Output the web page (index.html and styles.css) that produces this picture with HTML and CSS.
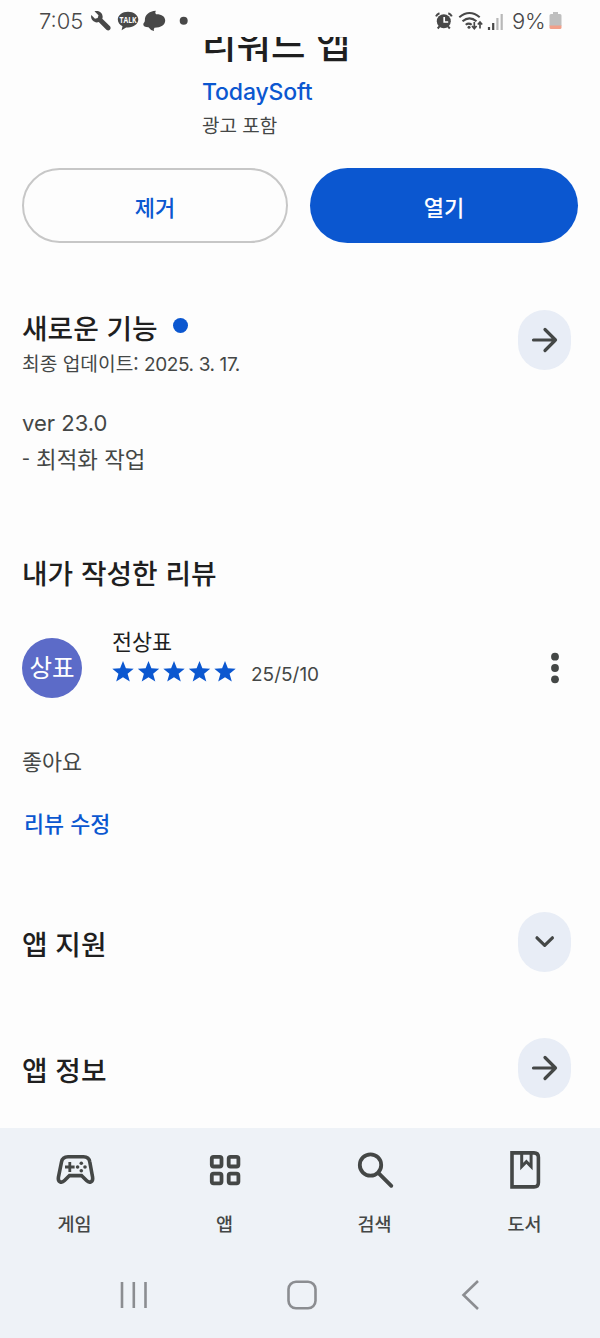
FILE: index.html
```html
<!DOCTYPE html>
<html lang="ko">
<head>
<meta charset="utf-8">
<title>리워드 앱</title>
<link rel="stylesheet" href="styles.css">
</head>
<body>
<header class="status">
  <span class="clock">7:05</span>
  <svg class="status-left" width="100" height="24" viewBox="0 0 100 24" fill="#484848">
    <path d="M3.5 2.3 7.5 6.200 6.700 9 4 9.700 .3 6C-.9 10.500 3.100 14.500 7.700 13.100L15.400 20.800Q17.400 22 18.800 20.700 20.300 19 19 17.300L11.300 9.800C13 5 8.500.5 3.500 2.300Z"/>
    <path d="M37 2.700c-5.700 0-10.200 3.500-10.200 7.900 0 2.900 1.900 5.300 4.700 6.700l-.9 4 4.500-2.900q1 .1 1.900.1c5.700 0 10.300-3.500 10.300-7.900S42.700 2.700 37 2.700Z"/>
    <text class="talk" x="28.500" y="13.500" textLength="17" lengthAdjust="spacingAndGlyphs">TALK</text>
    <path d="M64.800 1.800Q63.600 4 65 5.200C70.500 5 74.200 7.500 74.200 11.500 74.200 15.800 70 18.600 63.500 18.700Q62.300 20 63 22 59 21 57.500 18.300C54 18.300 52.200 17 52.300 15.300 52.400 13.800 54 13.200 53.900 11 53.800 6 58 2.200 64.800 1.800Z"/>
    <circle cx="92.700" cy="11.800" r="4"/>
  </svg>
  <svg class="status-right" width="72" height="24" viewBox="0 0 72 24" fill="none" stroke="#484848">
    <circle cx="8.800" cy="12.200" r="7" fill="#484848" stroke="none"/>
    <path d="M9.200 8v5h4" stroke="#fff" stroke-width="1.700"/>
    <path d="M1 7.300Q2 5 4.500 4.200M16.800 7.300Q15.800 5 13.300 4.200M4.500 17.300 2.700 19.500M13 17.300l1.800 2.200" stroke-width="2"/>
    <path d="M24.300 8.200Q34.500-.2 44.700 8.200M27.500 12.300Q34.500 6.300 41.500 12.300M30.700 15.800q3-2.400 6 0" stroke-width="2.100"/>
    <circle cx="34" cy="18.300" r="1.500" fill="#484848" stroke="none"/>
    <path d="M39.300 13v6.500M37 17l2.300 2.700 2.300-2.700M45 19.500V13M42.800 15.500 45 13l2.200 2.500" stroke-width="1.700"/>
    <path d="M54 18v3M58.200 14v7" stroke-width="2.200"/>
    <path d="M62.400 9v12M66.700 5v16" stroke="#b8b8b8" stroke-width="2.200"/>
  </svg>
  <span class="percent">9%</span>
  <svg width="13" height="20" viewBox="0 0 13 20"><path d="M4 1h5v2h2q1.500 0 1.500 1.500V15H.5V4.500Q.5 3 2 3h2Z" fill="#bfbfbf"/><path d="M.5 14.500h12v2q0 1.500-1.500 1.500H2Q.5 18 .5 16.500Z" fill="#f2a08a"/></svg>
</header>

<main>
  <section class="hero">
    <h1 class="title">리워드 앱</h1>
    <div class="developer">TodaySoft</div>
    <div class="ads">광고 포함</div>
  </section>

  <div class="actions">
    <button class="button outline">제거</button>
    <button class="button filled">열기</button>
  </div>

  <section class="news">
    <div class="row">
      <div class="news-head">
        <h2>새로운 기능<i class="dot"></i></h2>
        <p class="updated">최종 업데이트: <span class="date">2025. 3. 17.</span></p>
      </div>
      <span class="round"><svg width="28" height="28" viewBox="0 0 28 28"><path d="M2.500 14h22M14 3.500 24.500 14 14 24.500"/></svg></span>
    </div>
    <p class="notes"><span class="version">ver 23.0</span><span>- 최적화 작업</span></p>
  </section>

  <section class="review">
    <h2>내가 작성한 리뷰</h2>
    <div class="reviewer">
      <span class="avatar">상표</span>
      <div class="who">
        <div class="name">전상표</div>
        <div class="rating">
          <svg width="124" height="22" viewBox="0 0 124 22" fill="#0b57d0">
            <defs><path id="star" d="m11 0 2.900 7.300 7.800.4-6.100 5 2.200 7.900L11 16.300l-6.800 4.300 2.200-7.900L.3 7.700l7.800-.4Z"/></defs>
            <use href="#star"/><use href="#star" x="25.500"/><use href="#star" x="51"/><use href="#star" x="76.500"/><use href="#star" x="102"/>
          </svg>
          <span class="review-date">25/5/10</span>
        </div>
      </div>
      <svg class="more" width="10" height="32" viewBox="0 0 10 32" fill="#444746"><circle cx="5" cy="4.700" r="3.900"/><circle cx="5" cy="16" r="3.900"/><circle cx="5" cy="27.300" r="3.900"/></svg>
    </div>
    <p class="comment">좋아요</p>
    <a class="edit">리뷰 수정</a>
  </section>

  <section class="row support">
    <h2>앱 지원</h2>
    <span class="round"><svg width="28" height="28" viewBox="0 0 28 28"><path d="m6 9.800 7.700 7.500 7.700-7.500"/></svg></span>
  </section>
  <section class="row about">
    <h2>앱 정보</h2>
    <span class="round"><svg width="28" height="28" viewBox="0 0 28 28"><path d="M2.500 14h22M14 3.500 24.500 14 14 24.500"/></svg></span>
  </section>
</main>

<footer class="bottom">
  <nav class="tabs">
    <a class="tab"><svg width="44" height="44" viewBox="0 0 44 44" fill="none" stroke="#444746" stroke-width="3.600">
      <path d="M15 8.800h15.500q5.500 0 6.300 5.200l2.800 15.300c.8 4.700-3.200 6.200-6.100 3.300L28.500 27.600H16.500l-5 5c-2.900 2.900-6.900 1.400-6.100-3.300L8.500 14q1-5.200 6.500-5.200Z"/>
      <path d="M16.800 14v10M12 19h9.600" stroke-width="2.800"/>
      <g fill="#444746" stroke="none"><circle cx="28.300" cy="15.200" r="1.800"/><circle cx="24.600" cy="19" r="1.800"/><circle cx="32" cy="19" r="1.800"/><circle cx="28.300" cy="22.800" r="1.800"/></g>
    </svg><span>게임</span></a>
    <a class="tab"><svg width="44" height="44" viewBox="0 0 44 44" fill="none" stroke="#444746" stroke-width="3.800">
      <rect x="8.800" y="8.800" width="9.700" height="9.700" rx="1.800"/><rect x="25.700" y="8.800" width="9.700" height="9.700" rx="1.800"/><rect x="8.800" y="25.700" width="9.700" height="9.700" rx="1.800"/><rect x="25.700" y="25.700" width="9.700" height="9.700" rx="1.800"/>
    </svg><span>앱</span></a>
    <a class="tab"><svg width="44" height="44" viewBox="0 0 44 44" fill="none" stroke="#444746" stroke-width="3.800" stroke-linecap="round">
      <circle cx="17.500" cy="17" r="10.700"/><path d="M25.300 24.800 38.300 37.800"/>
    </svg><span>검색</span></a>
    <a class="tab"><svg width="44" height="44" viewBox="0 0 44 44" fill="none" stroke="#444746" stroke-width="3.600">
      <path d="M9 4.900h22q4.400 0 4.400 4.400V34.500q0 4.400-4.400 4.400H9Z"/><path d="M18.700 5v13.500l4.700-4.800 4.700 4.800V5" stroke-width="3"/>
    </svg><span>도서</span></a>
  </nav>
  <div class="system">
    <svg width="30" height="32" viewBox="0 0 30 32"><path d="M3 3v26M14.800 3v26M26.500 3v26"/></svg>
    <svg width="32" height="32" viewBox="0 0 32 32"><rect x="2.500" y="2.800" width="27" height="26.500" rx="7.500"/></svg>
    <svg width="20" height="32" viewBox="0 0 20 32"><path d="M18 2 3.500 16 18 30"/></svg>
  </div>
</footer>
</body>
</html>
```
FILE: styles.css
```css
* { box-sizing: border-box; }
body { margin: 0; width: 600px; height: 1338px; overflow: hidden; background: #fdfdfd; color: #1f1f1f; font-family: "Noto Sans CJK KR", sans-serif; }
h1, h2, p { margin: 0; }
svg { display: block; flex: none; }

.status { display: flex; align-items: center; height: 37px; padding: 4px 38px 0 39px; color: #484848; font: 22px/30px Inter, sans-serif; }
.clock { width: 52px; font-weight: 300; white-space: nowrap; }
.talk { font: bold 8px "Open Sans", sans-serif; fill: #fff; }
.status-right { margin-left: auto; }
.percent { width: 36px; margin: 0 1px 0 5px; white-space: nowrap; font-weight: 300; letter-spacing: -.3px; }

.hero { height: 131px; padding-left: 202px; overflow: hidden; }
.title { margin-top: -15px; font-size: 37.500px; line-height: 40px; font-weight: 500; }
.developer { margin-top: 14px; font: 500 23px/32px Inter, sans-serif; letter-spacing: -.15px; color: #0b57d0; }
.ads { margin-top: 2px; font-size: 19px; line-height: 30px; color: #444746; }

.actions { display: flex; gap: 22px; padding: 0 22px; }
.button { height: 75px; border-radius: 38px; border: 0; padding: 0; font: 500 22px/32px "Noto Sans CJK KR", sans-serif; }
.outline { width: 266px; background: transparent; border: 2px solid #c7c7c7; color: #0b57d0; }
.filled { width: 268px; background: #0b57d0; color: #fff; }

h2 { display: flex; align-items: center; font-size: 27.800px; line-height: 36px; font-weight: 500; }
.dot { width: 15px; height: 15px; margin: -3px 0 0 15px; border-radius: 50%; background: #0b57d0; }
.row { display: flex; justify-content: space-between; align-items: center; padding: 0 29px 0 22px; }
.round { display: flex; align-items: center; justify-content: center; width: 53px; height: 60px; border-radius: 27px; background: #e8edf6; }
.round svg { fill: none; stroke: #444746; stroke-width: 3.200px; stroke-linecap: round; stroke-linejoin: round; }

.news { height: 311px; padding-top: 67px; }
.news .row { align-items: flex-start; }
.news-head { height: 70px; margin-top: -1px; }
.updated { margin-top: 3px; font-size: 19.200px; line-height: 30px; color: #444746; }
.date { font-size: 19px; font-family: Inter, sans-serif; letter-spacing: -.4px; }
.notes { display: flex; flex-direction: column; padding: 26px 22px 0; font-size: 22.400px; line-height: 35px; color: #444746; }
.version { font-family: Inter, sans-serif; font-size: 22px; line-height: 36px; }

.review { height: 358px; padding: 0 22px; }
.reviewer { display: flex; height: 74px; margin-top: 36px; align-items: flex-start; }
.avatar { width: 60px; height: 60px; margin-top: 12px; border-radius: 50%; background: #5c6bc8; color: #fff; font-size: 24.500px; line-height: 58px; text-align: center; white-space: nowrap; }
.who { margin-left: 30px; margin-top: -1px; }
.name { font-size: 21.800px; line-height: 32px; }
.rating { display: flex; align-items: flex-start; gap: 15px; padding-top: 4px; }
.review-date { font: 19px/27px Inter, sans-serif; color: #444746; }
.more { margin: 26px 18px 0 auto; }
.comment { margin-top: 45px; font-size: 21.800px; line-height: 32px; color: #444746; }
.edit { display: block; margin: 30px 0 0 2px; font-size: 21.800px; line-height: 32px; font-weight: 500; color: #0b57d0; }

.support { height: 60px; }
.about { height: 60px; margin-top: 66px; }
.support h2, .about h2 { padding-top: 1px; }

.bottom { height: 210px; margin-top: 30px; background: #eef2f7; }
.tabs { display: flex; padding-top: 20px; }
.tab { width: 150px; display: flex; flex-direction: column; align-items: center; gap: 17px; font-size: 18.500px; line-height: 28px; font-weight: 500; color: #444746; }
.tab span { padding-right: 1px; }
.system { display: flex; align-items: center; margin-top: 42px; padding-left: 119px; }
.system svg { fill: none; stroke: #8b8d91; stroke-width: 2.600px; }
.system svg:nth-child(2) { margin-left: 137px; }
.system svg:nth-child(3) { margin-left: 142px; }
```
